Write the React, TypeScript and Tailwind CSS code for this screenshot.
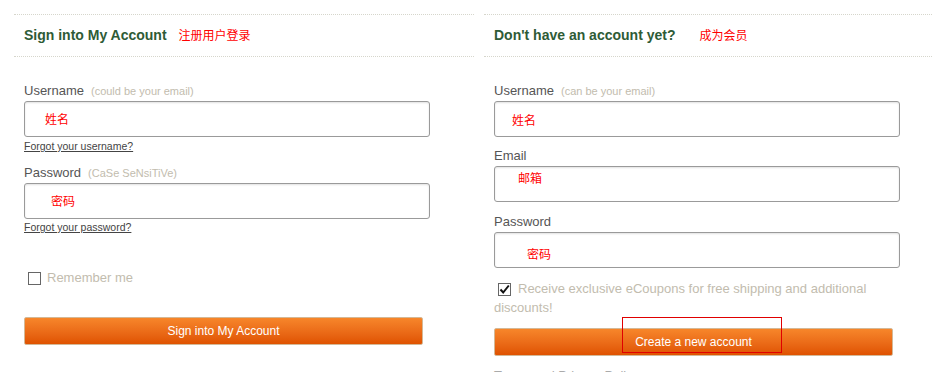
import React from "react";

const font = { fontFamily: '"Liberation Sans", Arial, "Noto Sans CJK SC", sans-serif' };

function Field({ label, hint, note, noteClass }: { label: string; hint?: string; note: string; noteClass: string }) {
  return (
    <div>
      <div className="flex items-baseline h-4 leading-4 mb-[2px]">
        <span className="text-[13px] text-[#555]">{label}</span>
        {hint && <span className="ml-[7px] text-[11px] text-[#c2bcae]">{hint}</span>}
      </div>
      <div className="h-[36px] rounded-[3px] border border-[#9a9a9a] bg-white shadow-[inset_0_1px_2px_rgba(0,0,0,0.12)]">
        <span className={"block text-[12px] leading-[14px] text-[#ff0000] " + noteClass}>{note}</span>
      </div>
    </div>
  );
}

function Header({ title, cn, gap }: { title: string; cn: string; gap: string }) {
  return (
    <div className="h-[43px] border-y border-dotted border-[#d6d6cc] flex items-center px-[10px]">
      <span className="text-[14px] font-bold text-[#2e5b36]">{title}</span>
      <span className={"text-[12px] text-[#ff0000] " + gap}>{cn}</span>
    </div>
  );
}

function OrangeButton({ label }: { label: string }) {
  return (
    <div className="h-[28px] w-[399px] rounded-[2px] border border-[#d4b896] bg-gradient-to-b from-[#f7862a] to-[#df5200] flex items-center justify-center text-white text-[12px]">
      {label}
    </div>
  );
}

export default function App() {
  return (
    <div className="w-[933px] h-[372px] overflow-hidden bg-white pt-[14px] pl-[14px] flex gap-[10px]" style={font}>
      {/* left column */}
      <div className="w-[460px] shrink-0">
        <Header title="Sign into My Account" cn="注册用户登录" gap="ml-3" />
        <div className="px-[10px]">
          <div className="mt-[26px] w-[406px]">
            <Field label="Username" hint="(could be your email)" note="姓名" noteClass="pl-[20px] pt-[11px]" />
          </div>
          <div className="mt-[2px] text-[10.5px] leading-[14px] text-[#444] underline">Forgot your username?</div>
          <div className="mt-[12px] w-[406px]">
            <Field label="Password" hint="(CaSe SeNsiTiVe)" note="密码" noteClass="pl-[26px] pt-[11px]" />
          </div>
          <div className="mt-[1px] text-[10.5px] leading-[14px] text-[#444] underline">Forgot your password?</div>
          <div className="mt-[36px] flex items-center h-4 pl-[4px]">
            <span className="w-[13px] h-[13px] border border-[#666] bg-white" />
            <span className="ml-[6px] text-[13px] text-[#c2bcae]">Remember me</span>
          </div>
          <div className="mt-[31px]">
            <OrangeButton label="Sign into My Account" />
          </div>
        </div>
      </div>

      {/* right column */}
      <div className="w-[460px] shrink-0">
        <Header title="Don't have an account yet?" cn="成为会员" gap="ml-[24px]" />
        <div className="px-[10px]">
          <div className="mt-[26px] w-[406px]">
            <Field label="Username" hint="(can be your email)" note="姓名" noteClass="pl-[17px] pt-[12px]" />
          </div>
          <div className="mt-[11px] w-[406px]">
            <Field label="Email" note="邮箱" noteClass="pl-[23px] pt-[5px]" />
          </div>
          <div className="mt-[12px] w-[406px]">
            <Field label="Password" note="密码" noteClass="pl-[32px] pt-[15px]" />
          </div>
          <div className="mt-[11px] w-[390px] text-[13px] leading-[19px] text-[#c2bcae]">
            <span className="inline-flex align-[-2px] ml-[4px] mr-[7px] w-[13px] h-[13px] border border-[#666] bg-white items-center justify-center">
              <svg width="11" height="11" viewBox="0 0 11 11">
                <path d="M1.5 5.5 L4.2 8.5 L9.8 1.5" fill="none" stroke="#111" strokeWidth="2" />
              </svg>
            </span>
            Receive exclusive eCoupons for free shipping and additional discounts!
          </div>
          <div className="relative mt-[11px]">
            <OrangeButton label="Create a new account" />
            <div className="absolute left-[128px] top-[-11px] w-[160px] h-[36px] border border-[#e00000]" />
          </div>
          <div className="mt-[10px] text-[13px] text-[#aaa]">Terms and Privacy Policy</div>
        </div>
      </div>
    </div>
  );
}
